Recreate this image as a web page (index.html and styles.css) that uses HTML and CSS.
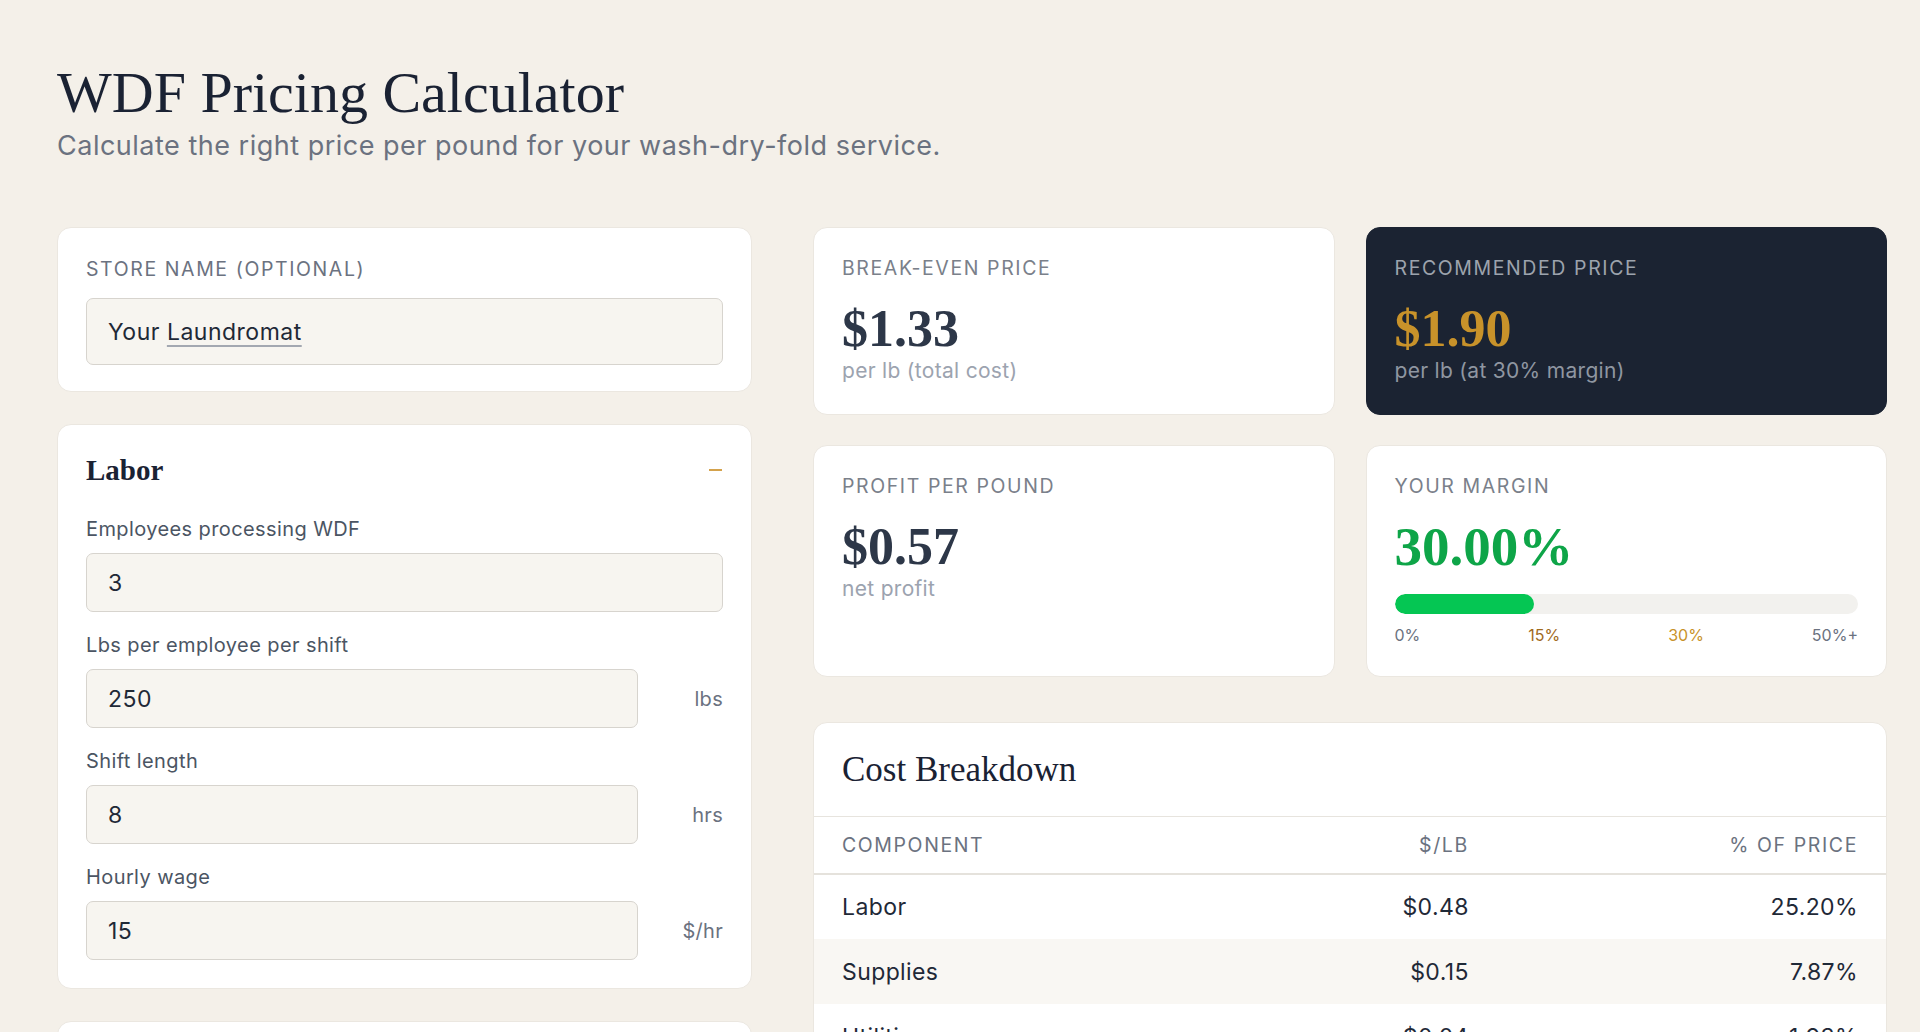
FILE: index.html
```html
<!DOCTYPE html>
<html lang="en">
<head>
<meta charset="utf-8">
<title>WDF Pricing Calculator</title>
<link rel="stylesheet" href="styles.css">
</head>
<body>
<div class="page">
  <header class="page-header">
    <h1 class="title">WDF Pricing Calculator</h1>
    <p class="subtitle">Calculate the right price per pound for your wash-dry-fold service.</p>
  </header>

  <main class="layout">
    <section class="inputs">
      <div class="card card--store">
        <div class="caps-label">Store name (optional)</div>
        <div class="field-box field-box--tall">Your <span class="spell">Laundromat</span></div>
      </div>

      <div class="card">
        <div class="section-head">
          <h2 class="section-title">Labor</h2>
          <span class="toggle" aria-label="collapse"></span>
        </div>
        <div class="fields">
          <div class="field">
            <div class="field-label">Employees processing WDF</div>
            <div class="field-box">3</div>
          </div>
          <div class="field">
            <div class="field-label">Lbs per employee per shift</div>
            <div class="field-row">
              <div class="field-box">250</div>
              <span class="unit">lbs</span>
            </div>
          </div>
          <div class="field">
            <div class="field-label">Shift length</div>
            <div class="field-row">
              <div class="field-box">8</div>
              <span class="unit">hrs</span>
            </div>
          </div>
          <div class="field">
            <div class="field-label">Hourly wage</div>
            <div class="field-row">
              <div class="field-box">15</div>
              <span class="unit">$/hr</span>
            </div>
          </div>
        </div>
      </div>

      <div class="card card--stub"></div>
    </section>

    <section class="results">
      <div class="stats">
        <div class="card stat">
          <div class="caps-label">Break-even price</div>
          <div class="stat-value">$1.33</div>
          <div class="stat-note">per lb (total cost)</div>
        </div>
        <div class="card stat stat--dark">
          <div class="caps-label">Recommended price</div>
          <div class="stat-value">$1.90</div>
          <div class="stat-note">per lb (at 30% margin)</div>
        </div>
        <div class="card stat">
          <div class="caps-label">Profit per pound</div>
          <div class="stat-value">$0.57</div>
          <div class="stat-note">net profit</div>
        </div>
        <div class="card stat">
          <div class="caps-label">Your margin</div>
          <div class="stat-value stat-value--green">30.00%</div>
          <div class="meter"><div class="meter-fill" style="width:30%"></div></div>
          <div class="ticks">
            <span>0%</span>
            <span class="tick-low">15%</span>
            <span class="tick-mid">30%</span>
            <span>50%+</span>
          </div>
        </div>
      </div>

      <div class="card breakdown">
        <h2 class="breakdown-title">Cost Breakdown</h2>
        <table class="table">
          <colgroup>
            <col class="col-name">
            <col class="col-lb">
            <col class="col-pct">
          </colgroup>
          <thead>
            <tr><th>Component</th><th class="num">$/lb</th><th class="num">% of price</th></tr>
          </thead>
          <tbody>
            <tr><td>Labor</td><td class="num">$0.48</td><td class="num">25.20%</td></tr>
            <tr class="alt"><td>Supplies</td><td class="num">$0.15</td><td class="num">7.87%</td></tr>
            <tr><td>Utilities</td><td class="num">$0.04</td><td class="num">1.93%</td></tr>
          </tbody>
        </table>
      </div>
    </section>
  </main>
</div>
</body>
</html>
```

FILE: styles.css
```css
* { box-sizing: border-box; }

html, body { height: 100%; }

body {
  margin: 0;
  background: #f4f0e9;
  font-family: Inter, "DejaVu Sans", sans-serif;
  color: #1f2937;
  overflow: hidden;
}

.page {
  padding: 58px 33px 0 57px;
}

.title {
  margin: 0;
  font-family: "Liberation Serif", serif;
  font-weight: 400;
  font-size: 58px;
  line-height: 70px;
  color: #1a2233;
}

.subtitle {
  margin: 0;
  font-size: 27px;
  line-height: 36px;
  color: #6b7280;
  letter-spacing: 0.5px;
}

.layout {
  display: grid;
  grid-template-columns: 695px 1fr;
  column-gap: 61px;
  margin-top: 63px;
  align-items: start;
}

.inputs {
  display: flex;
  flex-direction: column;
  gap: 32px;
}

.card {
  background: #fff;
  border: 1px solid #ebe7e0;
  border-radius: 14px;
  padding: 27px 28px 28px;
}

.card--store {
  padding: 28px 28px 26px;
}

.card--stub {
  height: 60px;
}

.caps-label {
  font-size: 19.5px;
  line-height: 27px;
  text-transform: uppercase;
  letter-spacing: 1.6px;
  color: #6b7280;
}

.field-box {
  flex: 1;
  height: 59px;
  display: flex;
  align-items: center;
  padding: 0 21px;
  background: #f7f5f0;
  border: 1.5px solid #d7d4ce;
  border-radius: 7px;
  font-size: 23px;
  color: #1f2937;
  letter-spacing: 0.5px;
}

.field-box--tall {
  height: 67px;
  margin-top: 15px;
  white-space: pre;
}

.spell {
  text-decoration: underline;
  text-decoration-color: #a3a8b1;
  text-decoration-thickness: 2px;
  text-underline-offset: 5px;
}

.section-head {
  display: flex;
  align-items: center;
  justify-content: space-between;
  height: 36px;
}

.section-title {
  margin: 0;
  font-family: "Liberation Serif", serif;
  font-weight: 700;
  font-size: 29px;
  line-height: 36px;
  color: #1a2233;
}

.toggle {
  width: 13px;
  height: 2px;
  background: #d4a24c;
  margin-right: 1px;
}

.fields {
  display: flex;
  flex-direction: column;
  gap: 20px;
  margin-top: 28px;
}

.field-label {
  font-size: 20px;
  line-height: 27px;
  color: #4b5563;
  letter-spacing: 0.4px;
  margin-bottom: 10px;
}

.field-row {
  display: flex;
  align-items: center;
}

.unit {
  width: 85px;
  text-align: right;
  font-size: 20px;
  color: #6b7280;
  letter-spacing: 0.3px;
}

.results {
  display: flex;
  flex-direction: column;
}

.stats {
  display: grid;
  grid-template-columns: 1fr 1fr;
  gap: 30px 31px;
}

.stat {
  padding: 27px 28px 30px;
}

.stat .caps-label {
  color: #7a808a;
}

.stat-value {
  margin-top: 21px;
  font-family: "Liberation Serif", serif;
  font-weight: 700;
  font-size: 52px;
  line-height: 52px;
  color: #2d3748;
}

.stat-note {
  margin-top: 2px;
  font-size: 21px;
  line-height: 27px;
  color: #9ca3af;
  letter-spacing: 0.3px;
}

.stat--dark {
  background: #1b2332;
  border-color: #1b2332;
}

.stat--dark .caps-label {
  color: #9da3ad;
}

.stat--dark .stat-value {
  color: #c8922a;
}

.stat--dark .stat-note {
  color: #8f96a1;
}

.stat-value--green {
  color: #0ea548;
  font-size: 55px;
}

.meter {
  margin-top: 21px;
  height: 20px;
  border-radius: 10px;
  background: #f2f1ee;
  overflow: hidden;
}

.meter-fill {
  height: 100%;
  background: #05c653;
  border-radius: 10px;
}

.ticks {
  display: flex;
  justify-content: space-between;
  margin-top: 10px;
  font-size: 16px;
  line-height: 22px;
  color: #6b7280;
}

.tick-low { color: #a16a1c; }
.tick-mid { color: #c8922a; }

.breakdown {
  margin-top: 45px;
  padding: 25px 0 0;
  overflow: hidden;
}

.breakdown-title {
  margin: 0;
  padding: 0 28px 24px;
  font-family: "Liberation Serif", serif;
  font-weight: 400;
  font-size: 35px;
  line-height: 44px;
  color: #1a2233;
  border-bottom: 1px solid #e7e4de;
}

.table {
  width: 100%;
  border-collapse: collapse;
  table-layout: fixed;
}

.col-name { width: 33.7%; }
.col-lb { width: 30%; }
.col-pct { width: 36.3%; }

.table th {
  height: 57px;
  padding: 0 28px;
  text-align: left;
  font-weight: 400;
  font-size: 19.5px;
  letter-spacing: 1.6px;
  text-transform: uppercase;
  color: #6b7280;
  border-bottom: 2px solid #e5e2dc;
}

.table td {
  height: 65px;
  padding: 0 28px;
  font-size: 23px;
  color: #1f2937;
  letter-spacing: 0.4px;
}

.table .num { text-align: right; }

.table tr.alt td { background: #f9f7f3; }
```
